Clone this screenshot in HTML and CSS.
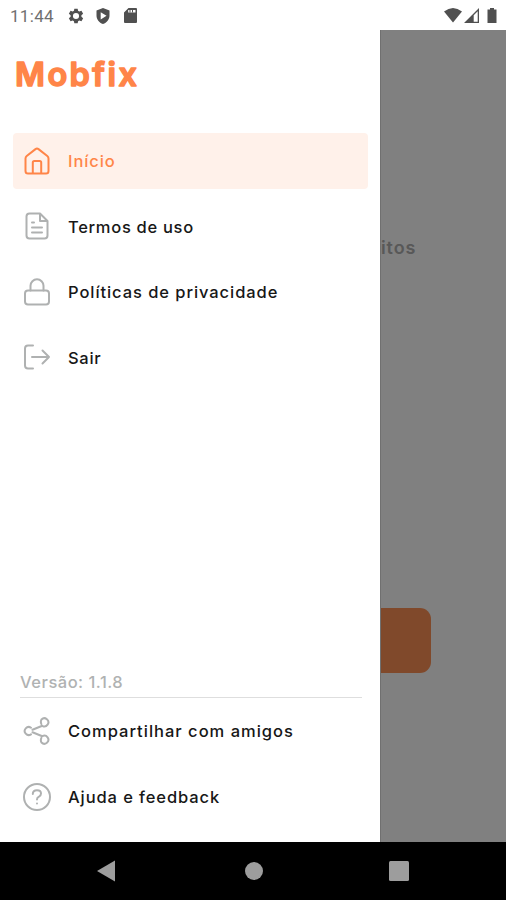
FILE: index.html
```html
<!DOCTYPE html>
<html lang="pt-BR">
<head>
<meta charset="utf-8">
<title>Mobfix</title>
<link rel="stylesheet" href="styles.css">
</head>
<body>
<div class="phone">
  <header class="status">
    <span class="clock">11:44</span>
    <svg class="gear" width="16" height="16" viewBox="0 0 24 24"><path fill-rule="evenodd" d="M9.500 1h5l.6 3.300 1.800 1.100 3.300-1.200 2.500 4.400-2.600 2.200v2.400l2.600 2.200-2.500 4.400-3.300-1.200-1.800 1.100-.6 3.300h-5l-.6-3.300-1.800-1.100-3.300 1.200-2.500-4.400 2.600-2.200v-2.400L1.300 8.600l2.500-4.400 3.300 1.200 1.800-1.100zM12 7.400a4.600 4.600 0 1 0 0 9.200 4.600 4.600 0 0 0 0-9.200z"/></svg>
    <svg class="shield" width="14" height="16" viewBox="0 0 14 16"><path fill-rule="evenodd" d="M7 0l6.500 2.400v5.100c0 4-2.700 7.200-6.500 8.500C3.200 14.700.5 11.500.5 7.500V2.400zM4.700 4.200v7.200l5.800-3.600z"/></svg>
    <svg class="card" width="13" height="15" viewBox="0 0 13 15"><path fill-rule="evenodd" d="M4.500 0H12a1 1 0 0 1 1 1v13a1 1 0 0 1-1 1H1a1 1 0 0 1-1-1V4.500zM4.200 2v2.500h7.300V2z"/><path d="M5.500 2h1v2.500h-1zM8 2h1v2.500H8z"/></svg>
    <svg class="signals" width="54" height="16" viewBox="0 0 54 16"><path d="M0 3.500Q9-3.500 18 3.500L9 14.500z"/><path fill-rule="evenodd" d="M35 0v15H20zM33.700 3.200l-4 4v6.500h4z"/><path d="M46 0h4v1.500h2.500V15h-9V1.500H46z"/></svg>
  </header>
  <main class="screen">
    <aside class="drawer">
      <h1 class="brand"><svg width="140" height="40" viewBox="0 0 140 40"><text x="0" y="30" textLength="122">Mobfix</text></svg></h1>
      <nav class="menu">
        <a class="item active"><svg class="icon" viewBox="0 0 28 28"><path d="M2.500 11.500Q2.500 10 3.700 9L12.500 2.100q1.500-1.200 3 0L24.300 9q1.200 1 1.200 2.500V24q0 2.500-2.500 2.500H5Q2.500 26.500 2.500 24zM9.800 26.500v-11q0-1.500 1.500-1.500h5.400q1.500 0 1.500 1.500v11"/></svg><span class="inicio">Início</span></a>
        <a class="item"><svg class="icon" viewBox="0 0 28 28"><path d="M17 1.500H6.500Q3.500 1.500 3.500 4.500v19q0 3 3 3h15q3 0 3-3V9zM17 1.500V9h7.500M9 10.500h2M9 15.500h10M9 20.500h10"/></svg><span class="termos">Termos de uso</span></a>
        <a class="item"><svg class="icon" viewBox="0 0 28 28"><rect x="2" y="12.500" width="24" height="14" rx="3"/><path d="M7.500 12.500V7.800a6.500 6.500 0 0 1 13 0v4.700"/></svg><span class="privacidade">Políticas de privacidade</span></a>
        <a class="item"><svg class="icon" viewBox="0 0 28 28"><path d="M10 2.500H5q-3 0-3 3v17q0 3 3 3h5M9 14h17M19.500 7.500L26 14l-6.500 6.500"/></svg><span class="sair">Sair</span></a>
      </nav>
      <footer class="bottom">
        <div class="version"><span>Versão: 1.1.8</span></div>
        <a class="item"><svg class="icon" viewBox="0 0 28 28"><path d="M8 10.700a4 4 0 1 0 0 6.600M18.500 2.500a4 4 0 1 1 .8 6.300M18.500 25.500a4 4 0 1 0 .8-6.300M9.500 12.800L19.300 8.800M9.500 15.200L19.300 19.200M18.500 2.500Q17.300 4.500 18.300 7M18.500 25.500Q17.300 23.500 18.300 21"/></svg><span class="compartilhar">Compartilhar com amigos</span></a>
        <a class="item"><svg class="icon" viewBox="0 0 28 28"><circle cx="14" cy="14" r="13"/><path d="M9.800 11q0-3.700 4.200-3.700 4 0 4 3.300 0 2-2 3.100-2 1-2 2.800M14 20.500v.1"/></svg><span class="ajuda">Ajuda e feedback</span></a>
      </footer>
    </aside>
    <section class="behind">
      <div class="clip">itos</div>
      <div class="button"></div>
    </section>
  </main>
  <div class="navbar">
    <svg width="18" height="22" viewBox="0 0 18 22"><path d="M18 .5v21L0 11z"/></svg>
    <svg class="home" width="18" height="18" viewBox="0 0 18 18"><circle cx="9" cy="9" r="9"/></svg>
    <svg width="20" height="20" viewBox="0 0 20 20"><rect width="20" height="20" rx="1.500"/></svg>
  </div>
</div>
</body>
</html>
```

FILE: styles.css
```css
* { box-sizing: border-box; }
body { margin: 0; background: #fff; font-family: Inter, "Liberation Sans", sans-serif; }
.phone { width: 506px; height: 900px; display: flex; flex-direction: column; overflow: hidden; }
svg { display: block; flex: none; }
.status { height: 30px; padding: 1px 9px 0 10px; display: flex; align-items: center; }
.status svg { fill: #505050; }
.clock { width: 58px; font: 400 17px/28px Roboto, sans-serif; letter-spacing: .3px; color: #707070; }
.shield { margin-left: 12px; }
.card { margin-left: 14px; }
.signals { margin-left: auto; margin-right: -1px; }
.screen { height: 812px; display: flex; background: #808080; }
.drawer { width: 380px; display: flex; flex-direction: column; background: #fff; }
.brand { height: 102.500px; margin: 0; padding: 26px 0 0 15px; }
.brand text { font: 600 32.500px Inter, sans-serif; fill: #ff8548; stroke: #ff8548; stroke-width: 1.500; stroke-linejoin: round; }
.menu { display: flex; flex-direction: column; gap: 9.500px; padding: 0 12px 0 13px; }
.item { height: 56px; padding-left: 10px; display: flex; align-items: center; gap: 17px; border-radius: 4px; color: #171717; font-size: 16.500px; line-height: 24px; font-weight: 500; white-space: nowrap; }
.menu .item span { padding-top: 1px; }
.icon { width: 28px; height: 28px; fill: none; stroke: #afb1b1; stroke-width: 2; stroke-linecap: round; stroke-linejoin: round; }
.active { background: #fff1ea; color: #ff8548; }
.active .icon { stroke: #ff8548; }
.inicio { letter-spacing: .9px; }
.termos { letter-spacing: .7px; }
.privacidade { letter-spacing: .93px; }
.sair { letter-spacing: .7px; }
.compartilhar { letter-spacing: 1px; }
.ajuda { letter-spacing: .9px; }
.bottom { margin-top: auto; height: 174px; padding: 0 12px 0 13px; }
.version { height: 30px; margin: 0 6px 5px 7px; border-bottom: 1px solid #dedede; color: #b0b2b2; font-size: 16.500px; line-height: 28px; font-weight: 500; letter-spacing: .5px; }
.bottom .item + .item { margin-top: 9.500px; }
.behind { width: 126px; border-left: 1px solid #707070; padding-top: 206px; overflow: hidden; }
.clip { height: 24px; font-size: 18px; line-height: 24px; font-weight: 600; color: #585858; letter-spacing: .9px; }
.button { width: 50px; height: 65px; margin-top: 348px; background: #80492b; border-radius: 0 11px 11px 0; }
.navbar { height: 58px; padding: 0 97px; background: #000; display: flex; align-items: center; justify-content: space-between; }
.navbar svg { fill: #9d9d9d; }
.navbar .home { margin-left: 3px; }
```
